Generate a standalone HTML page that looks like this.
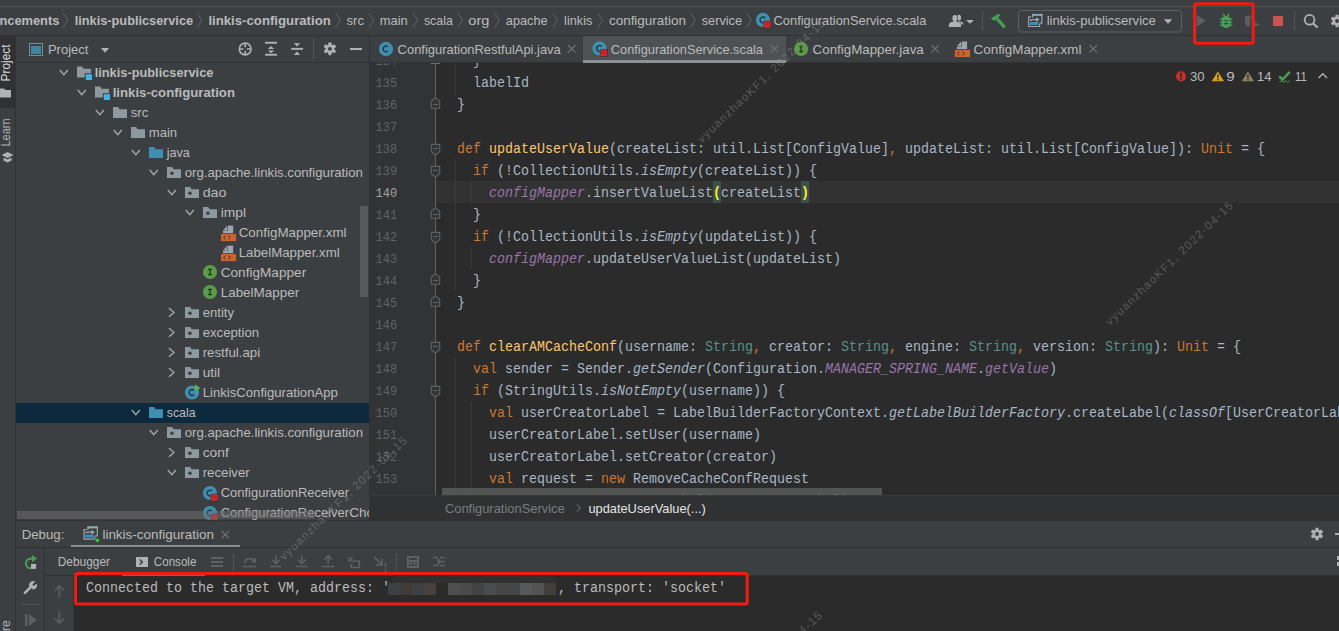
<!DOCTYPE html>
<html><head><meta charset="utf-8"><style>
html,body{margin:0;padding:0;background:#3C3F41;overflow:hidden;width:1339px;height:631px}
svg{display:block}
text{white-space:pre}
</style></head><body>
<svg width="1339" height="631" viewBox="0 0 1339 631" shape-rendering="crispEdges">
<rect x="0" y="0" width="1339" height="631" fill="#3C3F41" />
<line x1="0" y1="6.5" x2="1339" y2="6.5" stroke="#515151" stroke-width="1" />
<line x1="0" y1="35.5" x2="1339" y2="35.5" stroke="#323232" stroke-width="1" />
<text x="-0.6" y="24.6" fill="#BBBBBB" font-size="13.5" font-family="'Liberation Sans', sans-serif" font-weight="bold" textLength="60.0" lengthAdjust="spacingAndGlyphs" >ncements</text>
<polyline points="63,13 67.8,20.25 63,27.5" fill="none" stroke="#606365" stroke-width="1" shape-rendering="geometricPrecision"/>
<text x="74.7" y="24.6" fill="#BBBBBB" font-size="13.5" font-family="'Liberation Sans', sans-serif" font-weight="bold" textLength="118.4" lengthAdjust="spacingAndGlyphs" >linkis-publicservice</text>
<polyline points="197,13 201.8,20.25 197,27.5" fill="none" stroke="#606365" stroke-width="1" shape-rendering="geometricPrecision"/>
<text x="208.4" y="24.6" fill="#BBBBBB" font-size="13.5" font-family="'Liberation Sans', sans-serif" font-weight="bold" textLength="122.4" lengthAdjust="spacingAndGlyphs" >linkis-configuration</text>
<polyline points="335.6,13 340.40000000000003,20.25 335.6,27.5" fill="none" stroke="#606365" stroke-width="1" shape-rendering="geometricPrecision"/>
<text x="346.6" y="24.6" fill="#BBBBBB" font-size="13.5" font-family="'Liberation Sans', sans-serif" textLength="17.4" lengthAdjust="spacingAndGlyphs" >src</text>
<polyline points="369,13 373.8,20.25 369,27.5" fill="none" stroke="#606365" stroke-width="1" shape-rendering="geometricPrecision"/>
<text x="379.8" y="24.6" fill="#BBBBBB" font-size="13.5" font-family="'Liberation Sans', sans-serif" textLength="27.9" lengthAdjust="spacingAndGlyphs" >main</text>
<polyline points="412.9,13 417.7,20.25 412.9,27.5" fill="none" stroke="#606365" stroke-width="1" shape-rendering="geometricPrecision"/>
<text x="423.9" y="24.6" fill="#BBBBBB" font-size="13.5" font-family="'Liberation Sans', sans-serif" textLength="29.0" lengthAdjust="spacingAndGlyphs" >scala</text>
<polyline points="457.7,13 462.5,20.25 457.7,27.5" fill="none" stroke="#606365" stroke-width="1" shape-rendering="geometricPrecision"/>
<text x="468.3" y="24.6" fill="#BBBBBB" font-size="13.5" font-family="'Liberation Sans', sans-serif" textLength="21.1" lengthAdjust="spacingAndGlyphs" >org</text>
<polyline points="494.6,13 499.40000000000003,20.25 494.6,27.5" fill="none" stroke="#606365" stroke-width="1" shape-rendering="geometricPrecision"/>
<text x="505.8" y="24.6" fill="#BBBBBB" font-size="13.5" font-family="'Liberation Sans', sans-serif" textLength="41.8" lengthAdjust="spacingAndGlyphs" >apache</text>
<polyline points="552.8,13 557.5999999999999,20.25 552.8,27.5" fill="none" stroke="#606365" stroke-width="1" shape-rendering="geometricPrecision"/>
<text x="564.1" y="24.6" fill="#BBBBBB" font-size="13.5" font-family="'Liberation Sans', sans-serif" textLength="28.3" lengthAdjust="spacingAndGlyphs" >linkis</text>
<polyline points="597.6,13 602.4,20.25 597.6,27.5" fill="none" stroke="#606365" stroke-width="1" shape-rendering="geometricPrecision"/>
<text x="608.9" y="24.6" fill="#BBBBBB" font-size="13.5" font-family="'Liberation Sans', sans-serif" textLength="77.2" lengthAdjust="spacingAndGlyphs" >configuration</text>
<polyline points="690.6,13 695.4,20.25 690.6,27.5" fill="none" stroke="#606365" stroke-width="1" shape-rendering="geometricPrecision"/>
<text x="701.7" y="24.6" fill="#BBBBBB" font-size="13.5" font-family="'Liberation Sans', sans-serif" textLength="40.4" lengthAdjust="spacingAndGlyphs" >service</text>
<polyline points="746.6,13 751.4,20.25 746.6,27.5" fill="none" stroke="#606365" stroke-width="1" shape-rendering="geometricPrecision"/>
<g shape-rendering="geometricPrecision"><circle cx="763" cy="19.9" r="7.1" fill="#3F8FB0"/><path d="M765.2,18.099999999999998 A2.9,2.9 0 1 0 763.6,22.799999999999997" fill="none" stroke="#26343B" stroke-width="1.3"/><path d="M763.8,21.299999999999997 L771,20.799999999999997 L771,27.7 L763.8,28.2 Z" fill="#E2262B" stroke="#2B2B2B" stroke-width="0.6"/><path d="M765,23.099999999999998 H770 M765,25.0 H770" stroke="#9E1F22" stroke-width="0.8"/></g>
<text x="773.6" y="24.6" fill="#BBBBBB" font-size="13.5" font-family="'Liberation Sans', sans-serif" textLength="152.7" lengthAdjust="spacingAndGlyphs" >ConfigurationService.scala</text>
<g shape-rendering="geometricPrecision">
<ellipse cx="958.9" cy="17.6" rx="2.2" ry="2.9" fill="#AFB1B3"/>
<path d="M957,21 Q962.8,21 963.3,23.8 V24.6 H957 Z" fill="#AFB1B3"/>
<g fill="#AFB1B3" stroke="#3C3F41" stroke-width="1.3"><ellipse cx="954.8" cy="18.1" rx="2.4" ry="3.2"/><rect x="953.6" y="20" width="2.4" height="2.5"/><path d="M948.8,27 V25.2 Q948.8,21.8 954.9,21.6 Q961,21.8 961,25.2 V27 Z"/></g>
<g fill="#AFB1B3"><ellipse cx="954.8" cy="18.1" rx="2.4" ry="3.2"/><rect x="953.6" y="20" width="2.4" height="2.5"/><path d="M948.8,27 V25.2 Q948.8,21.8 954.9,21.6 Q961,21.8 961,25.2 V27 Z"/></g>
<path d="M966,20 h8 l-4,3.8 Z" fill="#AFB1B3"/>
</g>
<line x1="982.5" y1="11" x2="982.5" y2="31" stroke="#505254" stroke-width="1" />
<g shape-rendering="geometricPrecision"><path d="M990.8,18.6 L998.6,13.6 L1000.3,15.6 L994.2,21 Z" fill="#499C54"/><path d="M995.8,17.4 L1004.8,27.4" stroke="#499C54" stroke-width="3.2"/></g>
<rect x="1018.5" y="10.5" width="163" height="21.5" rx="3" fill="none" stroke="#5E6163" stroke-width="1" shape-rendering="geometricPrecision"/>
<g transform="translate(0,0)" shape-rendering="geometricPrecision"><path d="M1032.6,17.5 V14.6 H1041.9 V23.2 H1039.8" fill="none" stroke="#9AA7B0" stroke-width="1.2"/><rect x="1032" y="13.9" width="10.5" height="1.9" fill="#9AA7B0"/><path d="M1031.2,16.9 H1028.7 V26.5 H1039.6 V23.6" fill="none" stroke="#9AA7B0" stroke-width="1.2"/><path d="M1030.9,21 V19.6 H1036.5" fill="none" stroke="#9AA7B0" stroke-width="1.3"/><path d="M1036,17.2 L1039.6,19.6 L1036,22 Z" fill="#9AA7B0"/><rect x="1030" y="22" width="8.2" height="3" fill="#3A92BC"/></g>
<text x="1046.7" y="24.6" fill="#BBBBBB" font-size="13.5" font-family="'Liberation Sans', sans-serif" textLength="109.2" lengthAdjust="spacingAndGlyphs" >linkis-publicservice</text>
<path d="M1163.8,19.3 h8.5 l-4.25,4.4 Z" fill="#AFB1B3" shape-rendering="geometricPrecision"/>
<path d="M1196.6,15 L1205.8,20.8 L1196.6,26.6 Z" fill="#5C5F61" shape-rendering="geometricPrecision"/>
<g shape-rendering="geometricPrecision"><path d="M1221.8,19.5 C1221.8,16.8 1223.6,15.9 1226.1,15.9 C1228.6,15.9 1230.4,16.8 1230.4,19.5 V24.5 C1230.4,26.8 1228.5,27.9 1226.1,27.9 C1223.7,27.9 1221.8,26.8 1221.8,24.5 Z" fill="#499C54"/><path d="M1223.2,14 L1225,16.6 M1229,14 L1227.2,16.6" stroke="#499C54" stroke-width="1.5"/><path d="M1220,19.1 H1232.2 M1220,22.2 H1232.2 M1220,25.3 H1232.2" stroke="#499C54" stroke-width="1.5"/><path d="M1224.2,20.8 H1228.2 M1224.2,23.6 H1228.2" stroke="#3C3F41" stroke-width="1.1"/></g>
<g shape-rendering="geometricPrecision"><path d="M1244.9,16 L1251.6,15.3 V22 C1251.6,24.5 1249.6,26.2 1248.2,26.9 C1246.5,26 1244.9,24.5 1244.9,21.5 Z" fill="#5B5D5F"/><rect x="1250" y="17" width="1.6" height="8" fill="#3C3F41"/><path d="M1252.2,21.2 L1260,24.5 L1252.2,27.8 Z" fill="#5B5D5F"/></g>
<rect x="1272.8" y="16" width="10.3" height="10.2" fill="#C75450" />
<line x1="1294.5" y1="11" x2="1294.5" y2="31" stroke="#505254" stroke-width="1" />
<g shape-rendering="geometricPrecision" fill="none" stroke="#AFB1B3"><circle cx="1309.6" cy="19.8" r="4.9" stroke-width="1.8"/><path d="M1313.2,23.4 L1317.6,27.6" stroke-width="2.1"/></g>
<g shape-rendering="geometricPrecision" fill="#AFB1B3"><rect x="1335.40" y="14.70" width="3.2" height="6.30" rx="0.8" transform="rotate(0 1337 21)"/><rect x="1335.40" y="14.70" width="3.2" height="6.30" rx="0.8" transform="rotate(60 1337 21)"/><rect x="1335.40" y="14.70" width="3.2" height="6.30" rx="0.8" transform="rotate(120 1337 21)"/><rect x="1335.40" y="14.70" width="3.2" height="6.30" rx="0.8" transform="rotate(180 1337 21)"/><rect x="1335.40" y="14.70" width="3.2" height="6.30" rx="0.8" transform="rotate(240 1337 21)"/><rect x="1335.40" y="14.70" width="3.2" height="6.30" rx="0.8" transform="rotate(300 1337 21)"/><circle cx="1337" cy="21" r="4.41"/><circle cx="1337" cy="21" r="1.89" fill="#3C3F41"/></g>
<rect x="1194.6" y="3.8" width="58.6" height="39.4" rx="1.8" fill="none" stroke="#F21A12" stroke-width="3" shape-rendering="geometricPrecision"/>
<rect x="0" y="36" width="15" height="72" fill="#2F3133" />
<line x1="15.5" y1="36" x2="15.5" y2="631" stroke="#323232" stroke-width="1" />
<text transform="translate(10.2,81.5) rotate(-90)" fill="#DDDDDD" font-size="12" font-family="'Liberation Sans', sans-serif" textLength="37" lengthAdjust="spacingAndGlyphs">Project</text>
<path d="M0,88.5 h4 l1.5,1.5 h5.5 v7.5 h-11 Z" fill="#AFB1B3" shape-rendering="geometricPrecision"/>
<text transform="translate(10.2,146.5) rotate(-90)" fill="#AFB1B3" font-size="12" font-family="'Liberation Sans', sans-serif" textLength="28" lengthAdjust="spacingAndGlyphs">Learn</text>
<path d="M1.5,155 L7.5,152 L13.5,155 L7.5,158 Z M3.5,157.5 v3 l4,2 l4,-2 v-3 l-4,2 Z" fill="#AFB1B3" shape-rendering="geometricPrecision"/>
<text transform="translate(10.2,631) rotate(-90)" fill="#AFB1B3" font-size="12" font-family="'Liberation Sans', sans-serif">re</text>
<line x1="16" y1="62.5" x2="369" y2="62.5" stroke="#323232" stroke-width="1" />
<g shape-rendering="crispEdges"><rect x="29.5" y="43.5" width="13" height="12" fill="none" stroke="#7F8B91" stroke-width="1"/><rect x="31" y="46" width="10" height="8" fill="#3E86A0"/></g>
<text x="47.9" y="54" fill="#BBBBBB" font-size="13.5" font-family="'Liberation Sans', sans-serif" textLength="40.6" lengthAdjust="spacingAndGlyphs" >Project</text>
<path d="M100.8,48 h8.4 l-4.2,4.8 Z" fill="#AFB1B3" shape-rendering="geometricPrecision"/>
<g shape-rendering="geometricPrecision" fill="none" stroke="#AFB1B3" stroke-width="1.6"><circle cx="245.2" cy="49" r="5.9"/><path d="M245.2,43 v4.2 M245.2,50.8 v4.2 M239.2,49 h4.2 M246.8,49 h4.2"/></g>
<g shape-rendering="geometricPrecision" fill="#AFB1B3"><rect x="265" y="41.8" width="12" height="1.9"/><rect x="265" y="53.8" width="12" height="1.9"/><path d="M267.8,49 L271,45.9 L274.2,49 Z M267.8,50.4 L271,53.3 L274.2,50.4 Z"/></g>
<g shape-rendering="geometricPrecision" fill="#AFB1B3"><rect x="291.2" y="47.9" width="11.8" height="1.9"/><path d="M293.8,43.2 L300.1,43.2 L297,46.5 Z M293.8,55 L300.1,55 L297,51.5 Z"/></g>
<line x1="313.5" y1="39" x2="313.5" y2="58.5" stroke="#505254" stroke-width="1" />
<g shape-rendering="geometricPrecision" fill="#AFB1B3"><rect x="328.30" y="42.40" width="3.2" height="6.40" rx="0.8" transform="rotate(0 329.9 48.8)"/><rect x="328.30" y="42.40" width="3.2" height="6.40" rx="0.8" transform="rotate(60 329.9 48.8)"/><rect x="328.30" y="42.40" width="3.2" height="6.40" rx="0.8" transform="rotate(120 329.9 48.8)"/><rect x="328.30" y="42.40" width="3.2" height="6.40" rx="0.8" transform="rotate(180 329.9 48.8)"/><rect x="328.30" y="42.40" width="3.2" height="6.40" rx="0.8" transform="rotate(240 329.9 48.8)"/><rect x="328.30" y="42.40" width="3.2" height="6.40" rx="0.8" transform="rotate(300 329.9 48.8)"/><circle cx="329.9" cy="48.8" r="4.48"/><circle cx="329.9" cy="48.8" r="1.92" fill="#3C3F41"/></g>
<rect x="350" y="48" width="12" height="2" fill="#AFB1B3" />
<line x1="369.5" y1="36" x2="369.5" y2="520" stroke="#323232" stroke-width="1" />
<line x1="370" y1="62.5" x2="1339" y2="62.5" stroke="#323232" stroke-width="1" />
<rect x="583" y="36" width="203" height="26" fill="#4E5254" />
<rect x="583" y="60" width="203" height="3" fill="#8B9196" />
<g shape-rendering="geometricPrecision"><circle cx="386" cy="48.9" r="7.1" fill="#3F8FB0"/><path d="M388,46.9 A2.8,2.8 0 1 0 388,50.9" fill="none" stroke="#25323A" stroke-width="1.3"/></g>
<text x="397.6" y="53.6" fill="#BBBBBB" font-size="13.5" font-family="'Liberation Sans', sans-serif" textLength="163.2" lengthAdjust="spacingAndGlyphs" >ConfigurationRestfulApi.java</text>
<path d="M567.9,45 l7.6,7.6 M575.5,45 l-7.6,7.6" stroke="#6E7174" stroke-width="1.2" shape-rendering="geometricPrecision"/>
<g shape-rendering="geometricPrecision"><circle cx="599.5" cy="48.4" r="7.1" fill="#3F8FB0"/><path d="M601.7,46.6 A2.9,2.9 0 1 0 600.1,51.3" fill="none" stroke="#26343B" stroke-width="1.3"/><path d="M600.3,49.8 L607.5,49.3 L607.5,56.199999999999996 L600.3,56.7 Z" fill="#E2262B" stroke="#2B2B2B" stroke-width="0.6"/><path d="M601.5,51.6 H606.5 M601.5,53.5 H606.5" stroke="#9E1F22" stroke-width="0.8"/></g>
<text x="610.8" y="53.6" fill="#BBBBBB" font-size="13.5" font-family="'Liberation Sans', sans-serif" textLength="152.2" lengthAdjust="spacingAndGlyphs" >ConfigurationService.scala</text>
<path d="M770.6,45 l7.6,7.6 M778.2,45 l-7.6,7.6" stroke="#6E7174" stroke-width="1.2" shape-rendering="geometricPrecision"/>
<g shape-rendering="geometricPrecision"><circle cx="801.1" cy="48.9" r="7.1" fill="#5A9A48"/><path d="M799.3000000000001,46.199999999999996 H802.9 M801.1,46.199999999999996 V51.6 M799.3000000000001,51.6 H802.9" fill="none" stroke="#1F2A1B" stroke-width="1.2"/></g>
<text x="812.6" y="53.6" fill="#BBBBBB" font-size="13.5" font-family="'Liberation Sans', sans-serif" textLength="111.2" lengthAdjust="spacingAndGlyphs" >ConfigMapper.java</text>
<path d="M931.3,45 l7.6,7.6 M938.9,45 l-7.6,7.6" stroke="#6E7174" stroke-width="1.2" shape-rendering="geometricPrecision"/>
<g shape-rendering="geometricPrecision"><path d="M956.9,41.5 h10.2 v7.6 h-10.2 Z" fill="#9AA7B0"/><path d="M956.5,41.099999999999994 h5.4 v5.6 h-5.4 Z" fill="#3C3F41"/><path d="M956.9,46.3 L961.3,41.5 V46.3 Z" fill="#9AA7B0"/><rect x="954.9" y="49.9" width="15.1" height="7.1" fill="#D0632B"/><path d="M959.3,51.5 L957.5,53.4 L959.3,55.3 M962.5,51.5 L964.3,53.4 L962.5,55.3" fill="none" stroke="#3A2418" stroke-width="0.9"/></g>
<text x="973.6" y="53.6" fill="#BBBBBB" font-size="13.5" font-family="'Liberation Sans', sans-serif" textLength="107.8" lengthAdjust="spacingAndGlyphs" >ConfigMapper.xml</text>
<path d="M1089.4,45 l7.6,7.6 M1097.0,45 l-7.6,7.6" stroke="#6E7174" stroke-width="1.2" shape-rendering="geometricPrecision"/>
<rect x="370" y="63" width="969" height="433" fill="#2B2B2B" />
<rect x="370" y="63" width="66" height="433" fill="#313335" />
<rect x="436" y="181" width="903" height="22" fill="#323232" />
<g shape-rendering="geometricPrecision">
<circle cx="1181" cy="76.4" r="5.1" fill="#C2302B"/><rect x="1180.2" y="72.8" width="1.6" height="4.4" fill="#2B2B2B"/><rect x="1180.2" y="78.2" width="1.6" height="1.6" fill="#2B2B2B"/>
<path d="M1217.9,71.5 L1224,81.3 H1211.8 Z" fill="#D9A41B"/><rect x="1217.2" y="74.6" width="1.5" height="3.3" fill="#2B2B2B"/><rect x="1217.2" y="78.8" width="1.5" height="1.5" fill="#2B2B2B"/>
<path d="M1247.9,71.5 L1254,81.3 H1241.8 Z" fill="#8A8266"/><rect x="1247.2" y="74.6" width="1.5" height="3.3" fill="#2B2B2B"/><rect x="1247.2" y="78.8" width="1.5" height="1.5" fill="#2B2B2B"/>
<path d="M1279.3,76.5 L1282.5,79.5 L1289.8,71.8" fill="none" stroke="#4FA152" stroke-width="2.4"/>
<path d="M1279.5,82.5 l2,-1.8 l2,1.8 l2,-1.8 l2,1.8 l2,-1.8" fill="none" stroke="#4FA152" stroke-width="1"/>
<path d="M1318.6,78 L1322.8,73.8 L1327,78" fill="none" stroke="#AFB1B3" stroke-width="1.4"/>
</g>
<text x="1189.9" y="81.2" fill="#BBBBBB" font-size="13.5" font-family="'Liberation Sans', sans-serif" textLength="14.6" lengthAdjust="spacingAndGlyphs" >30</text>
<text x="1226.2" y="81.2" fill="#BBBBBB" font-size="13.5" font-family="'Liberation Sans', sans-serif" textLength="8.4" lengthAdjust="spacingAndGlyphs" >9</text>
<text x="1257.0" y="81.2" fill="#BBBBBB" font-size="13.5" font-family="'Liberation Sans', sans-serif" textLength="14.4" lengthAdjust="spacingAndGlyphs" >14</text>
<text x="1295.1" y="81.2" fill="#BBBBBB" font-size="13.5" font-family="'Liberation Sans', sans-serif" textLength="11.7" lengthAdjust="spacingAndGlyphs" >11</text>
<rect x="16" y="403" width="353" height="20" fill="#0D293E" />
<polyline points="59.8,70 63.8,74.6 67.8,70" fill="none" stroke="#A6A8AA" stroke-width="1.35" shape-rendering="geometricPrecision"/>
<path d="M77,66.5 h5.2 l1.4,2.2 h7.4 v8.8 h-14 Z" fill="#8E999F" shape-rendering="geometricPrecision"/>
<rect x="85.3" y="73.7" width="7.2" height="6.8" fill="#3FB5E6" stroke="#3C3F41" stroke-width="1" shape-rendering="geometricPrecision"/>
<text x="94.7" y="76.8" fill="#BBBBBB" font-size="13.5" font-family="'Liberation Sans', sans-serif" font-weight="bold" textLength="118.7" lengthAdjust="spacingAndGlyphs" >linkis-publicservice</text>
<polyline points="77.8,90 81.8,94.6 85.8,90" fill="none" stroke="#A6A8AA" stroke-width="1.35" shape-rendering="geometricPrecision"/>
<path d="M95,86.5 h5.2 l1.4,2.2 h7.4 v8.8 h-14 Z" fill="#8E999F" shape-rendering="geometricPrecision"/>
<rect x="103.3" y="93.7" width="7.2" height="6.8" fill="#3FB5E6" stroke="#3C3F41" stroke-width="1" shape-rendering="geometricPrecision"/>
<text x="112.7" y="96.8" fill="#BBBBBB" font-size="13.5" font-family="'Liberation Sans', sans-serif" font-weight="bold" textLength="122.3" lengthAdjust="spacingAndGlyphs" >linkis-configuration</text>
<polyline points="95.8,110 99.8,114.6 103.8,110" fill="none" stroke="#A6A8AA" stroke-width="1.35" shape-rendering="geometricPrecision"/>
<path d="M113,107 h5.2 l1.4,2.2 h7.4 v8.8 h-14 Z" fill="#8E999F" shape-rendering="geometricPrecision"/>
<text x="130.7" y="116.8" fill="#BBBBBB" font-size="13.5" font-family="'Liberation Sans', sans-serif" textLength="17.7" lengthAdjust="spacingAndGlyphs" >src</text>
<polyline points="113.8,130 117.8,134.6 121.8,130" fill="none" stroke="#A6A8AA" stroke-width="1.35" shape-rendering="geometricPrecision"/>
<path d="M131,127 h5.2 l1.4,2.2 h7.4 v8.8 h-14 Z" fill="#8E999F" shape-rendering="geometricPrecision"/>
<text x="148.7" y="136.8" fill="#BBBBBB" font-size="13.5" font-family="'Liberation Sans', sans-serif" textLength="28.5" lengthAdjust="spacingAndGlyphs" >main</text>
<polyline points="131.8,150 135.8,154.6 139.8,150" fill="none" stroke="#A6A8AA" stroke-width="1.35" shape-rendering="geometricPrecision"/>
<path d="M149,147 h5.2 l1.4,2.2 h7.4 v8.8 h-14 Z" fill="#3D8EB0" shape-rendering="geometricPrecision"/>
<text x="166.7" y="156.8" fill="#BBBBBB" font-size="13.5" font-family="'Liberation Sans', sans-serif" textLength="23.2" lengthAdjust="spacingAndGlyphs" >java</text>
<polyline points="149.8,170 153.8,174.6 157.8,170" fill="none" stroke="#A6A8AA" stroke-width="1.35" shape-rendering="geometricPrecision"/>
<path d="M167,167 h5.2 l1.4,2.2 h7.4 v8.8 h-14 Z" fill="#8E999F" shape-rendering="geometricPrecision"/>
<circle cx="171.9" cy="173.3" r="1.8" fill="#3C3F41" shape-rendering="geometricPrecision"/>
<text x="184.7" y="176.8" fill="#BBBBBB" font-size="13.5" font-family="'Liberation Sans', sans-serif" textLength="178.2" lengthAdjust="spacingAndGlyphs" >org.apache.linkis.configuration</text>
<polyline points="167.8,190 171.8,194.6 175.8,190" fill="none" stroke="#A6A8AA" stroke-width="1.35" shape-rendering="geometricPrecision"/>
<path d="M185,187 h5.2 l1.4,2.2 h7.4 v8.8 h-14 Z" fill="#8E999F" shape-rendering="geometricPrecision"/>
<circle cx="189.9" cy="193.3" r="1.8" fill="#3C3F41" shape-rendering="geometricPrecision"/>
<text x="202.7" y="196.8" fill="#BBBBBB" font-size="13.5" font-family="'Liberation Sans', sans-serif" textLength="23.7" lengthAdjust="spacingAndGlyphs" >dao</text>
<polyline points="185.8,210 189.8,214.6 193.8,210" fill="none" stroke="#A6A8AA" stroke-width="1.35" shape-rendering="geometricPrecision"/>
<path d="M203,207 h5.2 l1.4,2.2 h7.4 v8.8 h-14 Z" fill="#8E999F" shape-rendering="geometricPrecision"/>
<circle cx="207.9" cy="213.3" r="1.8" fill="#3C3F41" shape-rendering="geometricPrecision"/>
<text x="220.7" y="216.8" fill="#BBBBBB" font-size="13.5" font-family="'Liberation Sans', sans-serif" textLength="25.4" lengthAdjust="spacingAndGlyphs" >impl</text>
<g shape-rendering="geometricPrecision"><path d="M223,225.6 h10.2 v7.6 h-10.2 Z" fill="#9AA7B0"/><path d="M222.6,225.2 h5.4 v5.6 h-5.4 Z" fill="#3C3F41"/><path d="M223,230.4 L227.4,225.6 V230.4 Z" fill="#9AA7B0"/><rect x="221" y="234" width="15.1" height="7.1" fill="#D0632B"/><path d="M225.4,235.6 L223.6,237.5 L225.4,239.4 M228.6,235.6 L230.4,237.5 L228.6,239.4" fill="none" stroke="#3A2418" stroke-width="0.9"/></g>
<text x="238.7" y="236.8" fill="#BBBBBB" font-size="13.5" font-family="'Liberation Sans', sans-serif" textLength="107.9" lengthAdjust="spacingAndGlyphs" >ConfigMapper.xml</text>
<g shape-rendering="geometricPrecision"><path d="M223,245.6 h10.2 v7.6 h-10.2 Z" fill="#9AA7B0"/><path d="M222.6,245.2 h5.4 v5.6 h-5.4 Z" fill="#3C3F41"/><path d="M223,250.4 L227.4,245.6 V250.4 Z" fill="#9AA7B0"/><rect x="221" y="254" width="15.1" height="7.1" fill="#D0632B"/><path d="M225.4,255.6 L223.6,257.5 L225.4,259.4 M228.6,255.6 L230.4,257.5 L228.6,259.4" fill="none" stroke="#3A2418" stroke-width="0.9"/></g>
<text x="238.7" y="256.8" fill="#BBBBBB" font-size="13.5" font-family="'Liberation Sans', sans-serif" textLength="101.0" lengthAdjust="spacingAndGlyphs" >LabelMapper.xml</text>
<g shape-rendering="geometricPrecision"><circle cx="210" cy="272" r="7.1" fill="#5A9A48"/><path d="M208.2,269.3 H211.8 M210,269.3 V274.7 M208.2,274.7 H211.8" fill="none" stroke="#1F2A1B" stroke-width="1.2"/></g>
<text x="220.7" y="276.8" fill="#BBBBBB" font-size="13.5" font-family="'Liberation Sans', sans-serif" textLength="85.5" lengthAdjust="spacingAndGlyphs" >ConfigMapper</text>
<g shape-rendering="geometricPrecision"><circle cx="210" cy="292" r="7.1" fill="#5A9A48"/><path d="M208.2,289.3 H211.8 M210,289.3 V294.7 M208.2,294.7 H211.8" fill="none" stroke="#1F2A1B" stroke-width="1.2"/></g>
<text x="220.7" y="296.8" fill="#BBBBBB" font-size="13.5" font-family="'Liberation Sans', sans-serif" textLength="78.5" lengthAdjust="spacingAndGlyphs" >LabelMapper</text>
<polyline points="169.0,308.2 174.0,312.5 169.0,316.8" fill="none" stroke="#A6A8AA" stroke-width="1.35" shape-rendering="geometricPrecision"/>
<path d="M185,307 h5.2 l1.4,2.2 h7.4 v8.8 h-14 Z" fill="#8E999F" shape-rendering="geometricPrecision"/>
<circle cx="189.9" cy="313.3" r="1.8" fill="#3C3F41" shape-rendering="geometricPrecision"/>
<text x="202.7" y="316.8" fill="#BBBBBB" font-size="13.5" font-family="'Liberation Sans', sans-serif" textLength="31.3" lengthAdjust="spacingAndGlyphs" >entity</text>
<polyline points="169.0,328.2 174.0,332.5 169.0,336.8" fill="none" stroke="#A6A8AA" stroke-width="1.35" shape-rendering="geometricPrecision"/>
<path d="M185,327 h5.2 l1.4,2.2 h7.4 v8.8 h-14 Z" fill="#8E999F" shape-rendering="geometricPrecision"/>
<circle cx="189.9" cy="333.3" r="1.8" fill="#3C3F41" shape-rendering="geometricPrecision"/>
<text x="202.7" y="336.8" fill="#BBBBBB" font-size="13.5" font-family="'Liberation Sans', sans-serif" textLength="56.4" lengthAdjust="spacingAndGlyphs" >exception</text>
<polyline points="169.0,348.2 174.0,352.5 169.0,356.8" fill="none" stroke="#A6A8AA" stroke-width="1.35" shape-rendering="geometricPrecision"/>
<path d="M185,347 h5.2 l1.4,2.2 h7.4 v8.8 h-14 Z" fill="#8E999F" shape-rendering="geometricPrecision"/>
<circle cx="189.9" cy="353.3" r="1.8" fill="#3C3F41" shape-rendering="geometricPrecision"/>
<text x="202.7" y="356.8" fill="#BBBBBB" font-size="13.5" font-family="'Liberation Sans', sans-serif" textLength="57.5" lengthAdjust="spacingAndGlyphs" >restful.api</text>
<polyline points="169.0,368.2 174.0,372.5 169.0,376.8" fill="none" stroke="#A6A8AA" stroke-width="1.35" shape-rendering="geometricPrecision"/>
<path d="M185,367 h5.2 l1.4,2.2 h7.4 v8.8 h-14 Z" fill="#8E999F" shape-rendering="geometricPrecision"/>
<circle cx="189.9" cy="373.3" r="1.8" fill="#3C3F41" shape-rendering="geometricPrecision"/>
<text x="202.7" y="376.8" fill="#BBBBBB" font-size="13.5" font-family="'Liberation Sans', sans-serif" textLength="17.4" lengthAdjust="spacingAndGlyphs" >util</text>
<g shape-rendering="geometricPrecision"><circle cx="192" cy="392.5" r="7.1" fill="#3F8FB0"/><path d="M194,390.5 A2.8,2.8 0 1 0 194,394.5" fill="none" stroke="#25323A" stroke-width="1.3"/></g>
<path d="M195.1,384.5 L200.4,387.9 L195.1,391.3 Z" fill="#62B543" shape-rendering="geometricPrecision"/>
<text x="202.7" y="396.8" fill="#BBBBBB" font-size="13.5" font-family="'Liberation Sans', sans-serif" textLength="135.2" lengthAdjust="spacingAndGlyphs" >LinkisConfigurationApp</text>
<polyline points="131.8,410 135.8,414.6 139.8,410" fill="none" stroke="#A6A8AA" stroke-width="1.35" shape-rendering="geometricPrecision"/>
<path d="M149,407 h5.2 l1.4,2.2 h7.4 v8.8 h-14 Z" fill="#3D8EB0" shape-rendering="geometricPrecision"/>
<text x="166.7" y="416.8" fill="#BBBBBB" font-size="13.5" font-family="'Liberation Sans', sans-serif" textLength="29.0" lengthAdjust="spacingAndGlyphs" >scala</text>
<polyline points="149.8,430 153.8,434.6 157.8,430" fill="none" stroke="#A6A8AA" stroke-width="1.35" shape-rendering="geometricPrecision"/>
<path d="M167,427 h5.2 l1.4,2.2 h7.4 v8.8 h-14 Z" fill="#8E999F" shape-rendering="geometricPrecision"/>
<circle cx="171.9" cy="433.3" r="1.8" fill="#3C3F41" shape-rendering="geometricPrecision"/>
<text x="184.7" y="436.8" fill="#BBBBBB" font-size="13.5" font-family="'Liberation Sans', sans-serif" textLength="178.3" lengthAdjust="spacingAndGlyphs" >org.apache.linkis.configuration</text>
<polyline points="169.0,448.2 174.0,452.5 169.0,456.8" fill="none" stroke="#A6A8AA" stroke-width="1.35" shape-rendering="geometricPrecision"/>
<path d="M185,447 h5.2 l1.4,2.2 h7.4 v8.8 h-14 Z" fill="#8E999F" shape-rendering="geometricPrecision"/>
<circle cx="189.9" cy="453.3" r="1.8" fill="#3C3F41" shape-rendering="geometricPrecision"/>
<text x="202.7" y="456.8" fill="#BBBBBB" font-size="13.5" font-family="'Liberation Sans', sans-serif" textLength="26.1" lengthAdjust="spacingAndGlyphs" >conf</text>
<polyline points="167.8,470 171.8,474.6 175.8,470" fill="none" stroke="#A6A8AA" stroke-width="1.35" shape-rendering="geometricPrecision"/>
<path d="M185,467 h5.2 l1.4,2.2 h7.4 v8.8 h-14 Z" fill="#8E999F" shape-rendering="geometricPrecision"/>
<circle cx="189.9" cy="473.3" r="1.8" fill="#3C3F41" shape-rendering="geometricPrecision"/>
<text x="202.7" y="476.8" fill="#BBBBBB" font-size="13.5" font-family="'Liberation Sans', sans-serif" textLength="47.0" lengthAdjust="spacingAndGlyphs" >receiver</text>
<g shape-rendering="geometricPrecision"><circle cx="210" cy="493" r="7.1" fill="#3F8FB0"/><path d="M212.2,491.2 A2.9,2.9 0 1 0 210.6,495.9" fill="none" stroke="#26343B" stroke-width="1.3"/><path d="M210.8,494.4 L218,493.9 L218,500.8 L210.8,501.3 Z" fill="#E2262B" stroke="#2B2B2B" stroke-width="0.6"/><path d="M212,496.2 H217 M212,498.1 H217" stroke="#9E1F22" stroke-width="0.8"/></g>
<text x="220.7" y="496.8" fill="#BBBBBB" font-size="13.5" font-family="'Liberation Sans', sans-serif" textLength="128.4" lengthAdjust="spacingAndGlyphs" >ConfigurationReceiver</text>
<g shape-rendering="geometricPrecision"><circle cx="210" cy="513" r="7.1" fill="#3F8FB0"/><path d="M212.2,511.2 A2.9,2.9 0 1 0 210.6,515.9" fill="none" stroke="#26343B" stroke-width="1.3"/><path d="M210.8,514.4 L218,513.9 L218,520.8 L210.8,521.3 Z" fill="#E2262B" stroke="#2B2B2B" stroke-width="0.6"/><path d="M212,516.2 H217 M212,518.1 H217" stroke="#9E1F22" stroke-width="0.8"/></g>
<svg x="0" y="0" width="369" height="631" overflow="hidden">
<text x="220.7" y="516.8" fill="#BBBBBB" font-size="13.5" font-family="'Liberation Sans', sans-serif" textLength="128.3" lengthAdjust="spacingAndGlyphs" >ConfigurationReceiver</text>
<text x="349.29999999999995" y="516.8" fill="#BBBBBB" font-size="13.5" font-family="'Liberation Sans', sans-serif" >Cho</text>
</svg>
<rect x="360" y="205.5" width="7.5" height="91.5" fill="#57595B" />
<rect x="17" y="510.5" width="298" height="8.3" fill="#6E6E6E" fill-opacity="0.5"/>
<line x1="455.5" y1="63" x2="455.5" y2="96" stroke="#393939" stroke-width="1" />
<line x1="455.5" y1="159" x2="455.5" y2="291" stroke="#393939" stroke-width="1" />
<line x1="455.5" y1="357" x2="455.5" y2="495" stroke="#393939" stroke-width="1" />
<line x1="471.5" y1="181" x2="471.5" y2="203" stroke="#393939" stroke-width="1" />
<line x1="471.5" y1="247" x2="471.5" y2="269" stroke="#393939" stroke-width="1" />
<line x1="471.5" y1="401" x2="471.5" y2="495" stroke="#393939" stroke-width="1" />
<line x1="435.5" y1="63" x2="435.5" y2="495" stroke="#5F6163" stroke-width="1" />
<path d="M431.3,108.3 h8.4 v-7.2 l-4.2,-3.3 l-4.2,3.3 Z" fill="#313335" stroke="#5F6163" stroke-width="1.1" shape-rendering="geometricPrecision"/>
<line x1="433.3" y1="104.4" x2="437.7" y2="104.4" stroke="#5F6163" stroke-width="1.2" />
<path d="M431.3,218.3 h8.4 v-7.2 l-4.2,-3.3 l-4.2,3.3 Z" fill="#313335" stroke="#5F6163" stroke-width="1.1" shape-rendering="geometricPrecision"/>
<line x1="433.3" y1="214.4" x2="437.7" y2="214.4" stroke="#5F6163" stroke-width="1.2" />
<path d="M431.3,284.3 h8.4 v-7.2 l-4.2,-3.3 l-4.2,3.3 Z" fill="#313335" stroke="#5F6163" stroke-width="1.1" shape-rendering="geometricPrecision"/>
<line x1="433.3" y1="280.4" x2="437.7" y2="280.4" stroke="#5F6163" stroke-width="1.2" />
<path d="M431.3,306.3 h8.4 v-7.2 l-4.2,-3.3 l-4.2,3.3 Z" fill="#313335" stroke="#5F6163" stroke-width="1.1" shape-rendering="geometricPrecision"/>
<line x1="433.3" y1="302.4" x2="437.7" y2="302.4" stroke="#5F6163" stroke-width="1.2" />
<path d="M431.3,144.4 h8.4 v7.3 l-4.2,3.3 l-4.2,-3.3 Z" fill="#313335" stroke="#5F6163" stroke-width="1.1" shape-rendering="geometricPrecision"/>
<line x1="433.3" y1="148.3" x2="437.7" y2="148.3" stroke="#5F6163" stroke-width="1.2" />
<path d="M431.3,166.4 h8.4 v7.3 l-4.2,3.3 l-4.2,-3.3 Z" fill="#313335" stroke="#5F6163" stroke-width="1.1" shape-rendering="geometricPrecision"/>
<line x1="433.3" y1="170.3" x2="437.7" y2="170.3" stroke="#5F6163" stroke-width="1.2" />
<path d="M431.3,232.4 h8.4 v7.3 l-4.2,3.3 l-4.2,-3.3 Z" fill="#313335" stroke="#5F6163" stroke-width="1.1" shape-rendering="geometricPrecision"/>
<line x1="433.3" y1="236.3" x2="437.7" y2="236.3" stroke="#5F6163" stroke-width="1.2" />
<path d="M431.3,342.4 h8.4 v7.3 l-4.2,3.3 l-4.2,-3.3 Z" fill="#313335" stroke="#5F6163" stroke-width="1.1" shape-rendering="geometricPrecision"/>
<line x1="433.3" y1="346.3" x2="437.7" y2="346.3" stroke="#5F6163" stroke-width="1.2" />
<path d="M431.3,386.4 h8.4 v7.3 l-4.2,3.3 l-4.2,-3.3 Z" fill="#313335" stroke="#5F6163" stroke-width="1.1" shape-rendering="geometricPrecision"/>
<line x1="433.3" y1="390.3" x2="437.7" y2="390.3" stroke="#5F6163" stroke-width="1.2" />
<line x1="431" y1="63.5" x2="440" y2="63.5" stroke="#6B6D6E" stroke-width="1" />
<rect x="713" y="181" width="8" height="22" fill="#3B514D" />
<rect x="801" y="181" width="8" height="22" fill="#3B514D" />
<svg x="370" y="63" width="66" height="433" overflow="hidden"><g transform="translate(-370,-63)">
<text x="375.6" y="65" fill="#606366" font-size="13.3" font-family="'Liberation Mono', monospace" textLength="21.6" lengthAdjust="spacingAndGlyphs">134</text>
<text x="375.6" y="87" fill="#606366" font-size="13.3" font-family="'Liberation Mono', monospace" textLength="21.6" lengthAdjust="spacingAndGlyphs">135</text>
<text x="375.6" y="109" fill="#606366" font-size="13.3" font-family="'Liberation Mono', monospace" textLength="21.6" lengthAdjust="spacingAndGlyphs">136</text>
<text x="375.6" y="131" fill="#606366" font-size="13.3" font-family="'Liberation Mono', monospace" textLength="21.6" lengthAdjust="spacingAndGlyphs">137</text>
<text x="375.6" y="153" fill="#606366" font-size="13.3" font-family="'Liberation Mono', monospace" textLength="21.6" lengthAdjust="spacingAndGlyphs">138</text>
<text x="375.6" y="175" fill="#606366" font-size="13.3" font-family="'Liberation Mono', monospace" textLength="21.6" lengthAdjust="spacingAndGlyphs">139</text>
<text x="375.6" y="197" fill="#A4A3A3" font-size="13.3" font-family="'Liberation Mono', monospace" textLength="21.6" lengthAdjust="spacingAndGlyphs">140</text>
<text x="375.6" y="219" fill="#606366" font-size="13.3" font-family="'Liberation Mono', monospace" textLength="21.6" lengthAdjust="spacingAndGlyphs">141</text>
<text x="375.6" y="241" fill="#606366" font-size="13.3" font-family="'Liberation Mono', monospace" textLength="21.6" lengthAdjust="spacingAndGlyphs">142</text>
<text x="375.6" y="263" fill="#606366" font-size="13.3" font-family="'Liberation Mono', monospace" textLength="21.6" lengthAdjust="spacingAndGlyphs">143</text>
<text x="375.6" y="285" fill="#606366" font-size="13.3" font-family="'Liberation Mono', monospace" textLength="21.6" lengthAdjust="spacingAndGlyphs">144</text>
<text x="375.6" y="307" fill="#606366" font-size="13.3" font-family="'Liberation Mono', monospace" textLength="21.6" lengthAdjust="spacingAndGlyphs">145</text>
<text x="375.6" y="329" fill="#606366" font-size="13.3" font-family="'Liberation Mono', monospace" textLength="21.6" lengthAdjust="spacingAndGlyphs">146</text>
<text x="375.6" y="351" fill="#606366" font-size="13.3" font-family="'Liberation Mono', monospace" textLength="21.6" lengthAdjust="spacingAndGlyphs">147</text>
<text x="375.6" y="373" fill="#606366" font-size="13.3" font-family="'Liberation Mono', monospace" textLength="21.6" lengthAdjust="spacingAndGlyphs">148</text>
<text x="375.6" y="395" fill="#606366" font-size="13.3" font-family="'Liberation Mono', monospace" textLength="21.6" lengthAdjust="spacingAndGlyphs">149</text>
<text x="375.6" y="417" fill="#606366" font-size="13.3" font-family="'Liberation Mono', monospace" textLength="21.6" lengthAdjust="spacingAndGlyphs">150</text>
<text x="375.6" y="439" fill="#606366" font-size="13.3" font-family="'Liberation Mono', monospace" textLength="21.6" lengthAdjust="spacingAndGlyphs">151</text>
<text x="375.6" y="461" fill="#606366" font-size="13.3" font-family="'Liberation Mono', monospace" textLength="21.6" lengthAdjust="spacingAndGlyphs">152</text>
<text x="375.6" y="483" fill="#606366" font-size="13.3" font-family="'Liberation Mono', monospace" textLength="21.6" lengthAdjust="spacingAndGlyphs">153</text>
<text x="375.6" y="505" fill="#606366" font-size="13.3" font-family="'Liberation Mono', monospace" textLength="21.6" lengthAdjust="spacingAndGlyphs">154</text>
</g></svg>
<svg x="436" y="63" width="903" height="433" overflow="hidden"><g transform="translate(-436,-63)">
<text x="473" y="65" fill="#A9B7C6" font-size="14.5" font-family="'Liberation Mono', monospace" textLength="8.0" lengthAdjust="spacingAndGlyphs" >}</text>
<text x="473" y="87" fill="#A9B7C6" font-size="14.5" font-family="'Liberation Mono', monospace" textLength="56.0" lengthAdjust="spacingAndGlyphs" >labelId</text>
<text x="457" y="109" fill="#A9B7C6" font-size="14.5" font-family="'Liberation Mono', monospace" textLength="8.0" lengthAdjust="spacingAndGlyphs" >}</text>
<text x="457" y="153" fill="#CC7832" font-size="14.5" font-family="'Liberation Mono', monospace" textLength="24.0" lengthAdjust="spacingAndGlyphs" >def</text>
<text x="489" y="153" fill="#FFC66D" font-size="14.5" font-family="'Liberation Mono', monospace" textLength="120.0" lengthAdjust="spacingAndGlyphs" >updateUserValue</text>
<text x="609" y="153" fill="#A9B7C6" font-size="14.5" font-family="'Liberation Mono', monospace" textLength="280.0" lengthAdjust="spacingAndGlyphs" >(createList: util.List[ConfigValue]</text>
<text x="889" y="153" fill="#CC7832" font-size="14.5" font-family="'Liberation Mono', monospace" textLength="8.0" lengthAdjust="spacingAndGlyphs" >,</text>
<text x="897" y="153" fill="#A9B7C6" font-size="14.5" font-family="'Liberation Mono', monospace" textLength="304.0" lengthAdjust="spacingAndGlyphs" > updateList: util.List[ConfigValue]): </text>
<text x="1201" y="153" fill="#CC7832" font-size="14.5" font-family="'Liberation Mono', monospace" textLength="32.0" lengthAdjust="spacingAndGlyphs" >Unit</text>
<text x="1233" y="153" fill="#A9B7C6" font-size="14.5" font-family="'Liberation Mono', monospace" textLength="32.0" lengthAdjust="spacingAndGlyphs" > = {</text>
<text x="473" y="175" fill="#CC7832" font-size="14.5" font-family="'Liberation Mono', monospace" textLength="16.0" lengthAdjust="spacingAndGlyphs" >if</text>
<text x="489" y="175" fill="#A9B7C6" font-size="14.5" font-family="'Liberation Mono', monospace" textLength="152.0" lengthAdjust="spacingAndGlyphs" > (!CollectionUtils.</text>
<text x="641" y="175" fill="#A9B7C6" font-size="14.5" font-family="'Liberation Mono', monospace" font-style="italic" textLength="56.0" lengthAdjust="spacingAndGlyphs" >isEmpty</text>
<text x="697" y="175" fill="#A9B7C6" font-size="14.5" font-family="'Liberation Mono', monospace" textLength="120.0" lengthAdjust="spacingAndGlyphs" >(createList)) {</text>
<text x="489" y="197" fill="#9876AA" font-size="14.5" font-family="'Liberation Mono', monospace" font-style="italic" textLength="96.0" lengthAdjust="spacingAndGlyphs" >configMapper</text>
<text x="585" y="197" fill="#A9B7C6" font-size="14.5" font-family="'Liberation Mono', monospace" textLength="128.0" lengthAdjust="spacingAndGlyphs" >.insertValueList</text>
<text x="713" y="197" fill="#FFEF28" font-size="14.5" font-family="'Liberation Mono', monospace" font-weight="bold" textLength="8.0" lengthAdjust="spacingAndGlyphs" >(</text>
<text x="721" y="197" fill="#A9B7C6" font-size="14.5" font-family="'Liberation Mono', monospace" textLength="80.0" lengthAdjust="spacingAndGlyphs" >createList</text>
<text x="801" y="197" fill="#FFEF28" font-size="14.5" font-family="'Liberation Mono', monospace" font-weight="bold" textLength="8.0" lengthAdjust="spacingAndGlyphs" >)</text>
<text x="473" y="219" fill="#A9B7C6" font-size="14.5" font-family="'Liberation Mono', monospace" textLength="8.0" lengthAdjust="spacingAndGlyphs" >}</text>
<text x="473" y="241" fill="#CC7832" font-size="14.5" font-family="'Liberation Mono', monospace" textLength="16.0" lengthAdjust="spacingAndGlyphs" >if</text>
<text x="489" y="241" fill="#A9B7C6" font-size="14.5" font-family="'Liberation Mono', monospace" textLength="152.0" lengthAdjust="spacingAndGlyphs" > (!CollectionUtils.</text>
<text x="641" y="241" fill="#A9B7C6" font-size="14.5" font-family="'Liberation Mono', monospace" font-style="italic" textLength="56.0" lengthAdjust="spacingAndGlyphs" >isEmpty</text>
<text x="697" y="241" fill="#A9B7C6" font-size="14.5" font-family="'Liberation Mono', monospace" textLength="120.0" lengthAdjust="spacingAndGlyphs" >(updateList)) {</text>
<text x="489" y="263" fill="#9876AA" font-size="14.5" font-family="'Liberation Mono', monospace" font-style="italic" textLength="96.0" lengthAdjust="spacingAndGlyphs" >configMapper</text>
<text x="585" y="263" fill="#A9B7C6" font-size="14.5" font-family="'Liberation Mono', monospace" textLength="256.0" lengthAdjust="spacingAndGlyphs" >.updateUserValueList(updateList)</text>
<text x="473" y="285" fill="#A9B7C6" font-size="14.5" font-family="'Liberation Mono', monospace" textLength="8.0" lengthAdjust="spacingAndGlyphs" >}</text>
<text x="457" y="307" fill="#A9B7C6" font-size="14.5" font-family="'Liberation Mono', monospace" textLength="8.0" lengthAdjust="spacingAndGlyphs" >}</text>
<text x="457" y="351" fill="#CC7832" font-size="14.5" font-family="'Liberation Mono', monospace" textLength="24.0" lengthAdjust="spacingAndGlyphs" >def</text>
<text x="489" y="351" fill="#FFC66D" font-size="14.5" font-family="'Liberation Mono', monospace" textLength="128.0" lengthAdjust="spacingAndGlyphs" >clearAMCacheConf</text>
<text x="617" y="351" fill="#A9B7C6" font-size="14.5" font-family="'Liberation Mono', monospace" textLength="88.0" lengthAdjust="spacingAndGlyphs" >(username: </text>
<text x="705" y="351" fill="#56918A" font-size="14.5" font-family="'Liberation Mono', monospace" textLength="48.0" lengthAdjust="spacingAndGlyphs" >String</text>
<text x="753" y="351" fill="#CC7832" font-size="14.5" font-family="'Liberation Mono', monospace" textLength="8.0" lengthAdjust="spacingAndGlyphs" >,</text>
<text x="761" y="351" fill="#A9B7C6" font-size="14.5" font-family="'Liberation Mono', monospace" textLength="80.0" lengthAdjust="spacingAndGlyphs" > creator: </text>
<text x="841" y="351" fill="#56918A" font-size="14.5" font-family="'Liberation Mono', monospace" textLength="48.0" lengthAdjust="spacingAndGlyphs" >String</text>
<text x="889" y="351" fill="#CC7832" font-size="14.5" font-family="'Liberation Mono', monospace" textLength="8.0" lengthAdjust="spacingAndGlyphs" >,</text>
<text x="897" y="351" fill="#A9B7C6" font-size="14.5" font-family="'Liberation Mono', monospace" textLength="72.0" lengthAdjust="spacingAndGlyphs" > engine: </text>
<text x="969" y="351" fill="#56918A" font-size="14.5" font-family="'Liberation Mono', monospace" textLength="48.0" lengthAdjust="spacingAndGlyphs" >String</text>
<text x="1017" y="351" fill="#CC7832" font-size="14.5" font-family="'Liberation Mono', monospace" textLength="8.0" lengthAdjust="spacingAndGlyphs" >,</text>
<text x="1025" y="351" fill="#A9B7C6" font-size="14.5" font-family="'Liberation Mono', monospace" textLength="80.0" lengthAdjust="spacingAndGlyphs" > version: </text>
<text x="1105" y="351" fill="#56918A" font-size="14.5" font-family="'Liberation Mono', monospace" textLength="48.0" lengthAdjust="spacingAndGlyphs" >String</text>
<text x="1153" y="351" fill="#A9B7C6" font-size="14.5" font-family="'Liberation Mono', monospace" textLength="24.0" lengthAdjust="spacingAndGlyphs" >): </text>
<text x="1177" y="351" fill="#CC7832" font-size="14.5" font-family="'Liberation Mono', monospace" textLength="32.0" lengthAdjust="spacingAndGlyphs" >Unit</text>
<text x="1209" y="351" fill="#A9B7C6" font-size="14.5" font-family="'Liberation Mono', monospace" textLength="32.0" lengthAdjust="spacingAndGlyphs" > = {</text>
<text x="473" y="373" fill="#CC7832" font-size="14.5" font-family="'Liberation Mono', monospace" textLength="24.0" lengthAdjust="spacingAndGlyphs" >val</text>
<text x="497" y="373" fill="#A9B7C6" font-size="14.5" font-family="'Liberation Mono', monospace" textLength="136.0" lengthAdjust="spacingAndGlyphs" > sender = Sender.</text>
<text x="633" y="373" fill="#A9B7C6" font-size="14.5" font-family="'Liberation Mono', monospace" font-style="italic" textLength="72.0" lengthAdjust="spacingAndGlyphs" >getSender</text>
<text x="705" y="373" fill="#A9B7C6" font-size="14.5" font-family="'Liberation Mono', monospace" textLength="120.0" lengthAdjust="spacingAndGlyphs" >(Configuration.</text>
<text x="825" y="373" fill="#9876AA" font-size="14.5" font-family="'Liberation Mono', monospace" font-style="italic" textLength="152.0" lengthAdjust="spacingAndGlyphs" >MANAGER_SPRING_NAME</text>
<text x="977" y="373" fill="#A9B7C6" font-size="14.5" font-family="'Liberation Mono', monospace" textLength="8.0" lengthAdjust="spacingAndGlyphs" >.</text>
<text x="985" y="373" fill="#9876AA" font-size="14.5" font-family="'Liberation Mono', monospace" font-style="italic" textLength="64.0" lengthAdjust="spacingAndGlyphs" >getValue</text>
<text x="1049" y="373" fill="#A9B7C6" font-size="14.5" font-family="'Liberation Mono', monospace" textLength="8.0" lengthAdjust="spacingAndGlyphs" >)</text>
<text x="473" y="395" fill="#CC7832" font-size="14.5" font-family="'Liberation Mono', monospace" textLength="16.0" lengthAdjust="spacingAndGlyphs" >if</text>
<text x="489" y="395" fill="#A9B7C6" font-size="14.5" font-family="'Liberation Mono', monospace" textLength="112.0" lengthAdjust="spacingAndGlyphs" > (StringUtils.</text>
<text x="601" y="395" fill="#A9B7C6" font-size="14.5" font-family="'Liberation Mono', monospace" font-style="italic" textLength="80.0" lengthAdjust="spacingAndGlyphs" >isNotEmpty</text>
<text x="681" y="395" fill="#A9B7C6" font-size="14.5" font-family="'Liberation Mono', monospace" textLength="104.0" lengthAdjust="spacingAndGlyphs" >(username)) {</text>
<text x="489" y="417" fill="#CC7832" font-size="14.5" font-family="'Liberation Mono', monospace" textLength="24.0" lengthAdjust="spacingAndGlyphs" >val</text>
<text x="513" y="417" fill="#A9B7C6" font-size="14.5" font-family="'Liberation Mono', monospace" textLength="376.0" lengthAdjust="spacingAndGlyphs" > userCreatorLabel = LabelBuilderFactoryContext.</text>
<text x="889" y="417" fill="#A9B7C6" font-size="14.5" font-family="'Liberation Mono', monospace" font-style="italic" textLength="176.0" lengthAdjust="spacingAndGlyphs" >getLabelBuilderFactory</text>
<text x="1065" y="417" fill="#A9B7C6" font-size="14.5" font-family="'Liberation Mono', monospace" textLength="104.0" lengthAdjust="spacingAndGlyphs" >.createLabel(</text>
<text x="1169" y="417" fill="#A9B7C6" font-size="14.5" font-family="'Liberation Mono', monospace" font-style="italic" textLength="56.0" lengthAdjust="spacingAndGlyphs" >classOf</text>
<text x="1225" y="417" fill="#A9B7C6" font-size="14.5" font-family="'Liberation Mono', monospace" textLength="152.0" lengthAdjust="spacingAndGlyphs" >[UserCreatorLabel])</text>
<text x="489" y="439" fill="#A9B7C6" font-size="14.5" font-family="'Liberation Mono', monospace" textLength="272.0" lengthAdjust="spacingAndGlyphs" >userCreatorLabel.setUser(username)</text>
<text x="489" y="461" fill="#A9B7C6" font-size="14.5" font-family="'Liberation Mono', monospace" textLength="288.0" lengthAdjust="spacingAndGlyphs" >userCreatorLabel.setCreator(creator)</text>
<text x="489" y="483" fill="#CC7832" font-size="14.5" font-family="'Liberation Mono', monospace" textLength="24.0" lengthAdjust="spacingAndGlyphs" >val</text>
<text x="513" y="483" fill="#A9B7C6" font-size="14.5" font-family="'Liberation Mono', monospace" textLength="88.0" lengthAdjust="spacingAndGlyphs" > request = </text>
<text x="601" y="483" fill="#CC7832" font-size="14.5" font-family="'Liberation Mono', monospace" textLength="24.0" lengthAdjust="spacingAndGlyphs" >new</text>
<text x="625" y="483" fill="#A9B7C6" font-size="14.5" font-family="'Liberation Mono', monospace" textLength="184.0" lengthAdjust="spacingAndGlyphs" > RemoveCacheConfRequest</text>
<text x="489" y="505" fill="#A9B7C6" font-size="14.5" font-family="'Liberation Mono', monospace" textLength="360.0" lengthAdjust="spacingAndGlyphs" >request.setUserCreatorLabel(userCreatorLabel)</text>
</g></svg>
<rect x="442" y="487.5" width="440" height="7.5" fill="#5E6060" fill-opacity="0.8"/>
<rect x="370" y="496" width="969" height="24" fill="#2F3133" />
<line x1="370" y1="495.5" x2="1339" y2="495.5" stroke="#393B3D" stroke-width="1" />
<text x="444.9" y="512.8" fill="#7A7D80" font-size="13.5" font-family="'Liberation Sans', sans-serif" textLength="119.8" lengthAdjust="spacingAndGlyphs" >ConfigurationService</text>
<polyline points="577,504.5 580.2,508 577,511.5" fill="none" stroke="#7A7D80" stroke-width="1" shape-rendering="geometricPrecision"/>
<text x="588.4" y="512.8" fill="#E6E6E6" font-size="13.5" font-family="'Liberation Sans', sans-serif" textLength="117.4" lengthAdjust="spacingAndGlyphs" >updateUserValue(...)</text>
<line x1="16" y1="520.5" x2="1339" y2="520.5" stroke="#323232" stroke-width="1" />
<text x="21.7" y="539.3" fill="#BBBBBB" font-size="13.5" font-family="'Liberation Sans', sans-serif" textLength="42.7" lengthAdjust="spacingAndGlyphs" >Debug:</text>
<g transform="translate(-944.6,512.6)" shape-rendering="geometricPrecision"><path d="M1032.6,17.5 V14.6 H1041.9 V23.2 H1039.8" fill="none" stroke="#9AA7B0" stroke-width="1.2"/><rect x="1032" y="13.9" width="10.5" height="1.9" fill="#9AA7B0"/><path d="M1031.2,16.9 H1028.7 V26.5 H1039.6 V23.6" fill="none" stroke="#9AA7B0" stroke-width="1.2"/><path d="M1030.9,21 V19.6 H1036.5" fill="none" stroke="#9AA7B0" stroke-width="1.3"/><path d="M1036,17.2 L1039.6,19.6 L1036,22 Z" fill="#9AA7B0"/><rect x="1030" y="22" width="8.2" height="3" fill="#3A92BC"/></g>
<circle cx="97.3" cy="540.3" r="2.2" fill="#29D32F" stroke="#3C3F41" stroke-width="0.8" shape-rendering="geometricPrecision"/>
<text x="102.4" y="539.3" fill="#BBBBBB" font-size="13.5" font-family="'Liberation Sans', sans-serif" textLength="111.6" lengthAdjust="spacingAndGlyphs" >linkis-configuration</text>
<path d="M221.6,531 l7.4,7.4 M229.0,531 l-7.4,7.4" stroke="#6E7174" stroke-width="1.2" shape-rendering="geometricPrecision"/>
<rect x="71" y="545" width="169" height="2.5" fill="#8C8F92" />
<g shape-rendering="geometricPrecision" fill="#AFB1B3"><rect x="1315.40" y="527.70" width="3.2" height="6.30" rx="0.8" transform="rotate(0 1317 534)"/><rect x="1315.40" y="527.70" width="3.2" height="6.30" rx="0.8" transform="rotate(60 1317 534)"/><rect x="1315.40" y="527.70" width="3.2" height="6.30" rx="0.8" transform="rotate(120 1317 534)"/><rect x="1315.40" y="527.70" width="3.2" height="6.30" rx="0.8" transform="rotate(180 1317 534)"/><rect x="1315.40" y="527.70" width="3.2" height="6.30" rx="0.8" transform="rotate(240 1317 534)"/><rect x="1315.40" y="527.70" width="3.2" height="6.30" rx="0.8" transform="rotate(300 1317 534)"/><circle cx="1317" cy="534" r="4.41"/><circle cx="1317" cy="534" r="1.89" fill="#3C3F41"/></g>
<rect x="1335" y="533" width="4" height="1.6" fill="#AFB1B3" />
<line x1="16" y1="547.5" x2="1339" y2="547.5" stroke="#323232" stroke-width="1" />
<line x1="44.5" y1="548" x2="44.5" y2="631" stroke="#323232" stroke-width="1" />
<line x1="45" y1="575.5" x2="1339" y2="575.5" stroke="#323232" stroke-width="1" />
<line x1="73.5" y1="576" x2="73.5" y2="631" stroke="#323232" stroke-width="1" />
<rect x="74" y="576" width="1265" height="55" fill="#2B2B2B" />
<g shape-rendering="geometricPrecision"><path d="M30.8,568.4 A4.9,4.9 0 0 1 30.8,558.6 H32.5" fill="none" stroke="#499C54" stroke-width="2.1"/><path d="M32,554.9 L37.2,558.6 L32,562.3 Z" fill="#499C54"/><rect x="31" y="563.9" width="5.1" height="5" fill="#AFB1B3"/></g>
<g shape-rendering="geometricPrecision" transform="translate(-0.6,6.4)"><path d="M25.5,586.5 L31.5,580.5" stroke="#AFB1B3" stroke-width="2.6" stroke-linecap="round"/><path d="M29.5,579 A4.3,4.3 0 0 1 35.8,575.2 L33,578 L34.4,579.5 L37.2,577 A4.3,4.3 0 0 1 33.5,583.2 Z" fill="#AFB1B3"/></g>
<line x1="20.5" y1="604.5" x2="39.5" y2="604.5" stroke="#505254" stroke-width="1" />
<g shape-rendering="geometricPrecision" fill="#5C5F61"><rect x="25" y="614" width="2.6" height="12"/><path d="M29,614 L37,620 L29,626 Z"/></g>
<text x="57.7" y="566" fill="#BBBBBB" font-size="13.5" font-family="'Liberation Sans', sans-serif" textLength="52.4" lengthAdjust="spacingAndGlyphs" >Debugger</text>
<g shape-rendering="crispEdges"><rect x="136" y="557" width="11.6" height="10" fill="#AFB1B3"/></g>
<polyline points="139.8,559.5 142.3,562 139.8,564.5" fill="none" stroke="#3C3F41" stroke-width="1.5" shape-rendering="geometricPrecision"/>
<text x="153.8" y="566" fill="#BBBBBB" font-size="13.5" font-family="'Liberation Sans', sans-serif" textLength="42.6" lengthAdjust="spacingAndGlyphs" >Console</text>
<rect x="122" y="574" width="83" height="1.5" fill="#6B6E71" />
<g shape-rendering="crispEdges" fill="#5E6163"><rect x="210.5" y="556.5" width="12.5" height="2"/><rect x="210.5" y="560.8" width="12.5" height="2"/><rect x="210.5" y="565" width="12.5" height="2"/></g>
<line x1="233.5" y1="553" x2="233.5" y2="571" stroke="#505254" stroke-width="1" />
<g shape-rendering="geometricPrecision" fill="none" stroke="#5E6163" stroke-width="1.6"><path d="M243,566.5 h13"/><path d="M244.5,563 C246,557.5 252,557 254.5,561.5"/><path d="M251.5,561.8 h3.8 v-3.8"/><path d="M270,566.5 h11.5 M275.8,555.5 v8 M272,559.8 l3.8,3.8 l3.8,-3.8"/><path d="M296,566.5 h11.5 M301.8,555.5 v8 M298,559.8 l3.8,3.8 l3.8,-3.8"/><path d="M322.5,566.5 h11.5 M328.2,564 v-8 M324.5,559.5 l3.8,-3.8 l3.8,3.8"/><path d="M347.8,557 l5,5 M347.8,562 l5,-5" stroke-width="1.3"/><path d="M353.5,561 h5.8 v6.5 h-8 v-3.5"/><path d="M374,557 l8,8 M376,565 h6 v-6"/><path d="M384,564 h3 M385.5,564 v8 M384,572 h3" stroke-width="1"/></g>
<line x1="396.5" y1="553" x2="396.5" y2="571" stroke="#505254" stroke-width="1" />
<g shape-rendering="crispEdges"><rect x="407" y="556" width="11.5" height="11.5" fill="#5E6163"/><rect x="409" y="558" width="7.5" height="2" fill="#3C3F41"/><rect x="409" y="561.5" width="1.6" height="1.6" fill="#3C3F41"/><rect x="412" y="561.5" width="1.6" height="1.6" fill="#3C3F41"/><rect x="415" y="561.5" width="1.6" height="1.6" fill="#3C3F41"/><rect x="409" y="564.2" width="1.6" height="1.6" fill="#3C3F41"/><rect x="412" y="564.2" width="1.6" height="1.6" fill="#3C3F41"/><rect x="415" y="564.2" width="1.6" height="1.6" fill="#3C3F41"/></g>
<g shape-rendering="geometricPrecision" fill="none" stroke="#5E6163" stroke-width="1.5"><path d="M433,557.5 h4 l3,4 l-3,4 h-4 M440,557.5 h4.8 M440,565.5 h4.8 M437,561.5 h7.8"/></g>
<rect x="1336.5" y="556" width="2.5" height="4" fill="#AFB1B3" />
<rect x="1336.5" y="561.5" width="2.5" height="4" fill="#AFB1B3" />
<g shape-rendering="geometricPrecision" fill="none" stroke="#5A5D5F" stroke-width="1.6"><path d="M59.3,586 v11.5 M54.5,590.8 l4.8,-4.8 l4.8,4.8"/><path d="M59.3,611 v12 M54.5,618.2 l4.8,4.8 l4.8,-4.8"/></g>
<text x="86" y="592" fill="#BBBBBB" font-size="14.5" font-family="'Liberation Mono', monospace" textLength="304.0" lengthAdjust="spacingAndGlyphs" >Connected to the target VM, address: &#x27;</text>
<text x="558" y="592" fill="#BBBBBB" font-size="14.5" font-family="'Liberation Mono', monospace" textLength="168.0" lengthAdjust="spacingAndGlyphs" >, transport: &#x27;socket&#x27;</text>
<path d="M392,583 V580 Q392,576 398,576 H436 Q446,576 452,576 H550 Q556,576 556,582 V583 Z" fill="#303030"/>
<rect x="388" y="583" width="12" height="12" fill="#3E3F42" />
<rect x="400" y="583" width="12" height="12" fill="#403B38" />
<rect x="412" y="583" width="12" height="12" fill="#3D3F43" />
<rect x="424" y="583" width="12" height="12" fill="#46413E" />
<rect x="448" y="583" width="12" height="12" fill="#4E4E4E" />
<rect x="460" y="583" width="12" height="12" fill="#4A4A4A" />
<rect x="472" y="583" width="12" height="12" fill="#434343" />
<rect x="484" y="583" width="12" height="12" fill="#4A4B4C" />
<rect x="496" y="583" width="12" height="12" fill="#454545" />
<rect x="508" y="583" width="12" height="12" fill="#444546" />
<rect x="520" y="583" width="12" height="12" fill="#575757" />
<rect x="532" y="583" width="12" height="12" fill="#535353" />
<rect x="544" y="583" width="12" height="12" fill="#413F3C" />
<rect x="75.5" y="573.5" width="1000" height="0" fill="none"/>
<rect x="75.6" y="573.6" width="671.6" height="30.3" rx="2" fill="none" stroke="#F21A12" stroke-width="3" shape-rendering="geometricPrecision"/>
<text transform="translate(702,143.5) rotate(-44)" fill="#A0A0A0" fill-opacity="0.40" font-size="11.5" font-family="'Liberation Sans', sans-serif" textLength="172" lengthAdjust="spacing">vyuanzhaoKF1, 2022-04-15</text>
<text transform="translate(1110,326) rotate(-44)" fill="#A0A0A0" fill-opacity="0.40" font-size="11.5" font-family="'Liberation Sans', sans-serif" textLength="172" lengthAdjust="spacing">vyuanzhaoKF1, 2022-04-15</text>
<text transform="translate(284,561) rotate(-44)" fill="#A0A0A0" fill-opacity="0.40" font-size="11.5" font-family="'Liberation Sans', sans-serif" textLength="172" lengthAdjust="spacing">vyuanzhaoKF1, 2022-04-15</text>
<text transform="translate(699,736) rotate(-44)" fill="#A0A0A0" fill-opacity="0.40" font-size="11.5" font-family="'Liberation Sans', sans-serif" textLength="172" lengthAdjust="spacing">vyuanzhaoKF1, 2022-04-15</text>
</svg>
</body></html>
